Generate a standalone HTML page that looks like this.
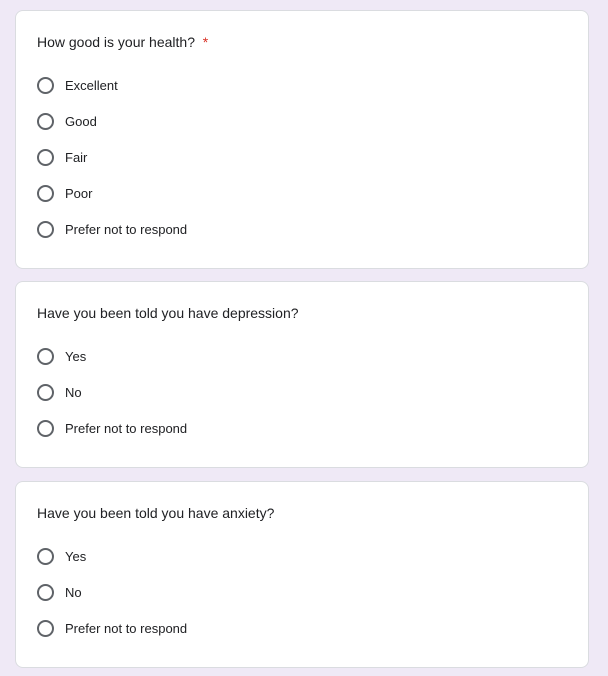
<!DOCTYPE html><html><head><style>
body{margin:0;background:#efe9f6;font-family:"Liberation Sans",Arial,sans-serif;color:#202124;width:608px;height:676px;position:relative;overflow:hidden}
.card{position:absolute;left:15px;width:574px;background:#fff;border:1px solid #dadce0;border-radius:8px;box-sizing:border-box}
.t{position:absolute;left:21px;font-size:14px;line-height:16px}
.o{position:absolute;left:21px;font-size:13px;line-height:16px;height:16px}
.o i{position:absolute;left:0;top:-1px;width:13px;height:13px;border:2px solid #5f6368;border-radius:50%}
.o span{position:absolute;left:28px;top:0;white-space:nowrap}
.s{color:#d93025}
</style></head><body>
<div class="card" style="top:10px;height:259px">
<div class="t" style="top:23px">How good is your health? <span class="s">&nbsp;*</span></div>
<div class="o" style="top:67px"><i></i><span>Excellent</span></div>
<div class="o" style="top:103px"><i></i><span>Good</span></div>
<div class="o" style="top:139px"><i></i><span>Fair</span></div>
<div class="o" style="top:175px"><i></i><span>Poor</span></div>
<div class="o" style="top:211px"><i></i><span>Prefer not to respond</span></div>
</div>
<div class="card" style="top:281px;height:187px">
<div class="t" style="top:23px">Have you been told you have depression?</div>
<div class="o" style="top:67px"><i></i><span>Yes</span></div>
<div class="o" style="top:103px"><i></i><span>No</span></div>
<div class="o" style="top:139px"><i></i><span>Prefer not to respond</span></div>
</div>
<div class="card" style="top:481px;height:187px">
<div class="t" style="top:23px">Have you been told you have anxiety?</div>
<div class="o" style="top:67px"><i></i><span>Yes</span></div>
<div class="o" style="top:103px"><i></i><span>No</span></div>
<div class="o" style="top:139px"><i></i><span>Prefer not to respond</span></div>
</div>
</body></html>
